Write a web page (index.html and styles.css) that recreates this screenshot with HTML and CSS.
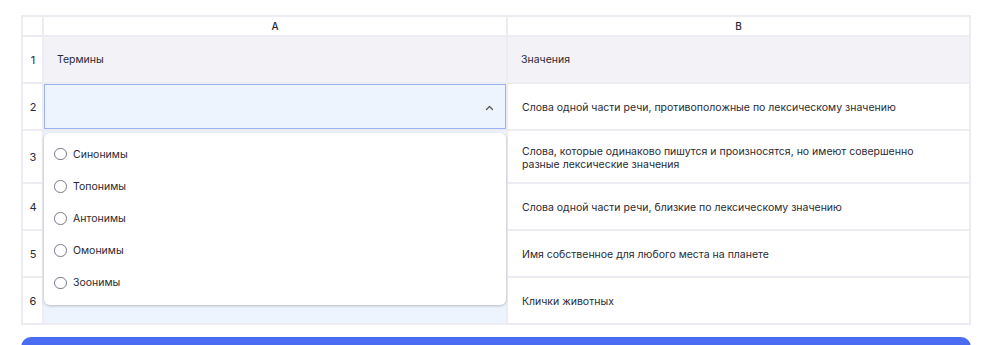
FILE: index.html
```html
<!DOCTYPE html>
<html lang="ru">

<head>
    <meta charset="UTF-8">
    <meta name="viewport" content="width=device-width, initial-scale=1.0">
    <title>Термины и значения</title>
    <link rel="stylesheet" href="styles.css">
</head>

<body>

    <div class="page">
        <div class="sheet">
            <div class="cell corner"></div>
            <div class="cell col-head">A</div>
            <div class="cell col-head">B</div>

            <div class="cell num">1</div>
            <div class="cell head">Термины</div>
            <div class="cell head">Значения</div>

            <div class="cell num">2</div>
            <div class="cell pick selected">
                <svg class="chevron" width="9" height="6" viewBox="0 0 9 6">
                    <path d="M1.5 4.5 L4.5 1.5 L7.5 4.5" fill="none" stroke="#555" stroke-width="1.3"
                        stroke-linecap="round" stroke-linejoin="round" />
                </svg>
                <div class="dropdown">
                    <label class="option"><span class="radio"></span>Синонимы</label>
                    <label class="option"><span class="radio"></span>Топонимы</label>
                    <label class="option"><span class="radio"></span>Антонимы</label>
                    <label class="option"><span class="radio"></span>Омонимы</label>
                    <label class="option"><span class="radio"></span>Зоонимы</label>
                </div>
            </div>
            <div class="cell text">Слова одной части речи, противоположные по лексическому значению</div>

            <div class="cell num">3</div>
            <div class="cell pick"></div>
            <div class="cell text">Слова, которые одинаково пишутся и произносятся, но имеют совершенно<br>разные лексические значения</div>

            <div class="cell num">4</div>
            <div class="cell pick"></div>
            <div class="cell text">Слова одной части речи, близкие по лексическому значению</div>

            <div class="cell num">5</div>
            <div class="cell pick"></div>
            <div class="cell text">Имя собственное для любого места на планете</div>

            <div class="cell num">6</div>
            <div class="cell pick"></div>
            <div class="cell text">Клички животных</div>
        </div>

        <button class="submit"></button>
    </div>

</body>

</html>
```

FILE: styles.css
```css
body {
    margin: 0;
    background-color: #ffffff;
    font-family: Inter, "Noto Sans", Arial, sans-serif;
    color: #2a2a33;
    font-size: 10.5px;
    overflow: hidden;
}

.page {
    padding: 15px 10px 0 21px;
}

.sheet {
    display: grid;
    grid-template-columns: 19px 462px 461px;
    grid-template-rows: 18px 45px 45px 51px 45px 45px 45px;
    gap: 2px;
    padding: 2px;
    background-color: #ececf2;
    width: 946px;
}

.cell {
    background-color: #ffffff;
    display: flex;
    align-items: center;
}

.corner {
    background-color: #ffffff;
}

.col-head {
    justify-content: center;
    font-size: 10px;
    font-weight: 500;
    color: #2a2a33;
}

.num {
    justify-content: center;
    font-size: 11px;
    padding-left: 1px;
    padding-top: 1px;
}

.head {
    background-color: #f3f2f7;
    padding-left: 13px;
}

.text {
    padding-left: 14px;
    padding-top: 2px;
    line-height: 13px;
}

.pick {
    background-color: #edf4fd;
    position: relative;
}

.selected {
    box-shadow: inset 0 0 0 1px #9bb2f6;
    justify-content: flex-end;
}

.chevron {
    margin-right: 12px;
    margin-top: 2px;
}

.dropdown {
    position: absolute;
    top: 49px;
    left: 0;
    right: 0;
    z-index: 2;
    background-color: #ffffff;
    border-radius: 6px;
    box-shadow: 0 1px 3px rgba(40, 40, 60, 0.28);
    padding: 5px 0 6px;
}

.option {
    display: flex;
    align-items: center;
    height: 32.2px;
    padding-left: 10px;
    font-size: 10.5px;
}

.radio {
    width: 10.5px;
    height: 10.5px;
    border: 1.5px solid #7d7c8c;
    border-radius: 50%;
    margin-right: 6.5px;
}

.submit {
    display: block;
    margin-top: 12px;
    width: 950px;
    height: 30px;
    border: none;
    border-radius: 10px;
    background-color: #4a6cf2;
}
```
